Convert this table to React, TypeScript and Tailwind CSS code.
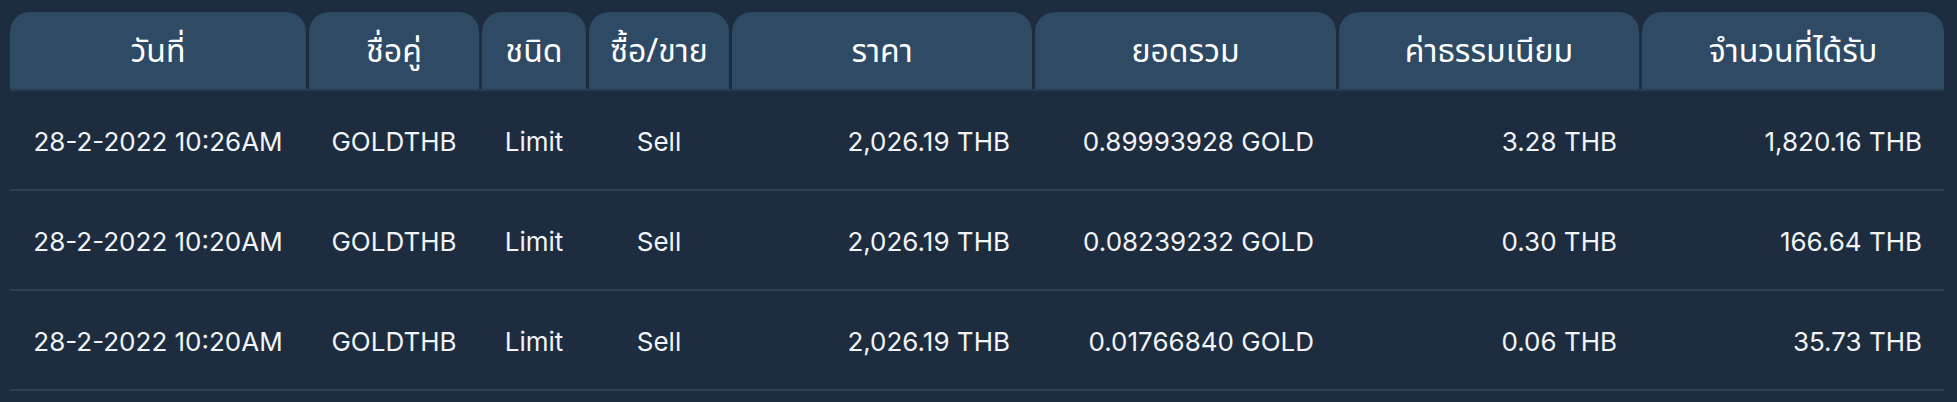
const columns = [
  { label: "วันที่", width: "w-[296px]", align: "center" },
  { label: "ชื่อคู่", width: "w-[170px]", align: "center" },
  { label: "ชนิด", width: "w-[104px]", align: "center" },
  { label: "ซื้อ/ขาย", width: "w-[140px]", align: "center" },
  { label: "ราคา", width: "w-[300px]", align: "right" },
  { label: "ยอดรวม", width: "w-[301px]", align: "right" },
  { label: "ค่าธรรมเนียม", width: "w-[300px]", align: "right" },
  { label: "จำนวนที่ได้รับ", width: "w-[302px]", align: "right" },
];

const rows = [
  ["28-2-2022 10:26AM", "GOLDTHB", "Limit", "Sell", "2,026.19 THB", "0.89993928 GOLD", "3.28 THB", "1,820.16 THB"],
  ["28-2-2022 10:20AM", "GOLDTHB", "Limit", "Sell", "2,026.19 THB", "0.08239232 GOLD", "0.30 THB", "166.64 THB"],
  ["28-2-2022 10:20AM", "GOLDTHB", "Limit", "Sell", "2,026.19 THB", "0.01766840 GOLD", "0.06 THB", "35.73 THB"],
];

export default function App() {
  return (
    <div className="w-[1957px] h-[402px] bg-[#1d2d3f] pl-[10px] pr-[13px] pt-[12px] overflow-hidden">
      {/* header tabs */}
      <div className="flex gap-[3px] border-b-2 border-[#273d54]">
        {columns.map((c) => (
          <div
            key={c.label}
            className={`${c.width} h-[77px] shrink-0 rounded-t-[20px] bg-[#2e4a65] flex items-center justify-center pt-[3px] text-white text-[32px] font-['Noto_Sans_Thai','Loma','Garuda','Noto_Sans',sans-serif]`}
          >
            {c.label}
          </div>
        ))}
      </div>

      {/* rows */}
      {rows.map((r, i) => (
        <div key={i} className="flex gap-[3px] h-[100px] border-b-2 border-[#2b3f55]">
          {r.map((v, j) => (
            <div
              key={j}
              className={`${columns[j].width} shrink-0 flex items-center pt-[2px] ${
                columns[j].align === "right" ? "justify-end pr-[22px]" : "justify-center"
              } text-[#f2f4f7] text-[26px] font-['Inter',sans-serif]`}
            >
              {v}
            </div>
          ))}
        </div>
      ))}
    </div>
  );
}
